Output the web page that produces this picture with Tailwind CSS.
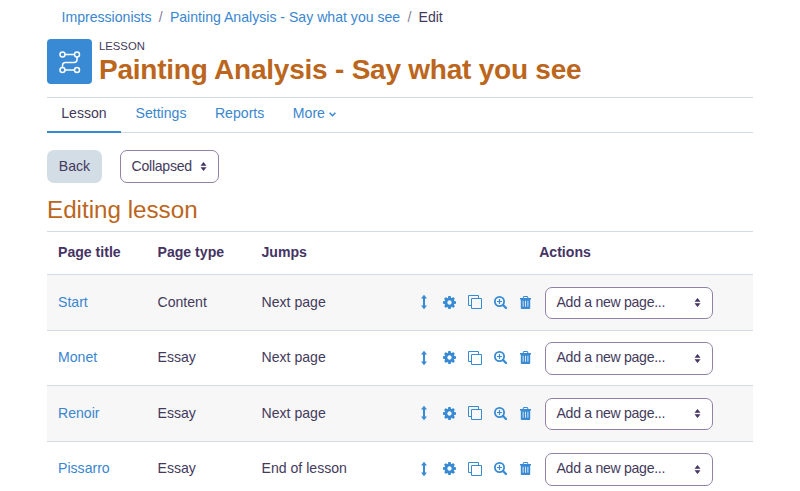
<!DOCTYPE html>
<html lang="en">
<head>
<meta charset="utf-8">
<title>Painting Analysis - Say what you see</title>
<script src="https://cdn.jsdelivr.net/npm/@tailwindcss/browser@4"></script>
</head>
<body class="h-[491px] overflow-hidden bg-white font-['Liberation_Sans',Arial,sans-serif] text-[14.1px] leading-5 text-[#443a5c]">
<svg class="hidden">
  <symbol id="sort" viewBox="0 0 7 9"><path d="M3.500 0 6.500 3.800h-6zM.5 5.200h6L3.500 9z" fill="#443363"/></symbol>
  <symbol id="move" viewBox="0 0 8 16"><path d="M4 .8 7 4.400H5v7.200h2L4 15.2 1 11.600h2V4.400H1z" fill="currentColor"/></symbol>
  <symbol id="gear" viewBox="0 0 1536 1536"><path fill="currentColor" d="M1024 768q0-106-75-181t-181-75-181 75-75 181 75 181 181 75 181-75 75-181zm512-109v222q0 12-8 23t-20 13l-185 28q-19 54-39 91 35 50 107 138 10 12 10 25t-9 23q-27 37-99 108t-94 71q-12 0-26-9l-138-108q-44 23-91 38-16 136-29 186-7 28-36 28H657q-14 0-24.500-8.500T621 1506l-28-184q-49-16-90-37l-141 107q-10 9-25 9-14 0-25-11-126-114-165-168-7-10-7-23 0-12 8-23 15-21 51-66.500t54-70.500q-27-50-41-99L29 913q-13-2-21-12.500T0 877V655q0-12 8-23t19-13l186-28q14-46 39-92-40-57-107-138-10-12-10-24 0-10 9-23 26-36 98.500-107.500T337 135q13 0 26 10l138 107q44-23 91-38 16-136 29-186 7-28 36-28h222q14 0 24.500 8.500T915 30l28 184q49 16 90 37l142-107q9-9 24-9 13 0 25 10 129 119 165 170 7 8 7 22 0 12-8 23-15 21-51 66.500t-54 70.500q26 50 41 98l183 28q13 2 21 12.500t8 23.500z"/></symbol>
  <symbol id="copy" viewBox="0 0 14 14"><path d="M3 10.500H.5V.5h10V3M3.500 3.500h10v10h-10z" fill="none" stroke="currentColor"/></symbol>
  <symbol id="zoom" viewBox="0 0 13 13"><circle cx="5.500" cy="5.500" r="4.600" fill="none" stroke="currentColor" stroke-width="1.800"/><path d="m9 9 3 3" stroke="currentColor" stroke-width="2.300" stroke-linecap="round"/><path d="M5.500 3v5M3 5.500h5" stroke="currentColor" stroke-width="1.200"/></symbol>
  <symbol id="trash" viewBox="0 0 11 13"><path fill="currentColor" fill-rule="evenodd" d="M3.500 0h4l1 2H11v1.400h-.8V12q0 1-1 1H1.800q-1 0-1-1V3.400H0V2h2.500zM4 1l-.4 1h3.800L7 1zM2.700 4.800v6h.8v-6zm2.400 0v6h.8v-6zm2.400 0v6h.8v-6z"/></symbol>
</svg>
<main class="ml-[47px] w-[706px]">
  <nav class="flex h-[39px] gap-[7.200px] pt-[7px] pl-[14.500px] text-[#3a86cf]">
    <a>Impressionists</a><span class="text-[#86809a]">/</span><a>Painting Analysis - Say what you see</a><span class="text-[#86809a]">/</span><span class="text-[#443a5c]">Edit</span>
  </nav>
  <header class="flex h-[58px] gap-[7px]">
    <div class="flex size-[45px] items-center justify-center rounded-[4px] bg-[#378ad3]">
      <svg class="size-6" viewBox="0 0 24 24" fill="none" stroke="#fff" stroke-width="1.500"><circle cx="4.500" cy="4.500" r="2.500"/><circle cx="19" cy="4.500" r="2.500"/><circle cx="4.500" cy="20" r="2.500"/><circle cx="19" cy="20" r="2.500"/><path d="M7 4.500h9.500M19 7v2.500q0 3-3 3H7.500q-3 0-3 3v2M7 20h9.500"/></svg>
    </div>
    <div>
      <div class="h-[14px] text-[11.300px] leading-[14px]">LESSON</div>
      <h1 class="text-[28px] leading-[34px] font-bold tracking-[-0.230px] whitespace-nowrap text-[#bb661c]">Painting Analysis - Say what you see</h1>
    </div>
  </header>
  <nav class="flex h-9 border-y border-[#d0dbe5] text-[#3a86cf]">
    <a class="h-[35px] w-[74px] border-b-2 border-[#378ad3] pt-[5px] text-center text-[#443a5c]">Lesson</a>
    <a class="ml-[14.500px] pt-[5px]">Settings</a>
    <a class="ml-[28.500px] pt-[5px]">Reports</a>
    <a class="ml-[28.500px] flex pt-[5px]">More<svg class="mt-[9px] ml-1 h-[5px] w-[7px]" viewBox="0 0 7 5" fill="none" stroke="currentColor" stroke-width="1.600"><path d="m.6.800 2.900 2.900L6.400.8"/></svg></a>
  </nav>
  <div class="flex h-[50px] gap-[18px] pt-[17px]">
    <button class="h-[33px] w-[55px] rounded-[7px] bg-[#d3dde6] pb-[1px]">Back</button>
    <button class="flex h-[33px] w-[99px] items-center justify-between rounded-[7px] border border-[#9181a5] pr-[11px] pl-[10.500px]"><span class="pb-[1px] tracking-[-0.250px]">Collapsed</span><svg class="h-[9px] w-[7px]"><use href="#sort"/></svg></button>
  </div>
  <h2 class="h-[48px] pt-[12px] text-[24.200px] leading-[30px] text-[#bb661c]">Editing lesson</h2>
  <section>
    <div class="grid h-[43px] grid-cols-[99.500px_104px_1fr_376px] items-center border-t border-[#d0dbe5] pb-[2px] pl-[11px] font-bold text-[#443363]">
      <div>Page title</div><div>Page type</div><div>Jumps</div><div class="text-center">Actions</div>
    </div>
    <div id="rows"></div>
  </section>
</main>
<template id="row">
  <div class="grid h-[55.500px] grid-cols-[99.500px_104px_158px_1fr] items-center border-t border-[#d0dbe5] pl-[11px] odd:bg-[#f7f7f7]">
    <a class="pb-[1px] text-[#3a86cf]"></a><span class="pb-[1px]"></span><span class="pb-[1px]"></span>
    <div class="flex items-center text-[#378ad3]">
      <svg class="h-4 w-2"><use href="#move"/></svg>
      <svg class="ml-[15px] size-[13px]"><use href="#gear"/></svg>
      <svg class="ml-[12.500px] h-[14px] w-[14px]"><use href="#copy"/></svg>
      <svg class="ml-[11.500px] size-[13px]"><use href="#zoom"/></svg>
      <svg class="ml-[13.500px] h-[13px] w-[11px]"><use href="#trash"/></svg>
      <button class="mt-[1px] ml-[13.500px] flex h-[32.500px] w-[168px] items-center justify-between rounded-[7px] border border-[#9181a5] bg-white pr-[11px] pl-[11px] text-[#443a5c]"><span class="pb-[2px] tracking-[-0.300px]">Add a new page...</span><svg class="h-[9px] w-[7px]"><use href="#sort"/></svg></button>
    </div>
  </div>
</template>
<script>
const pages = [['Start', 'Content', 'Next page'], ['Monet', 'Essay', 'Next page'], ['Renoir', 'Essay', 'Next page'], ['Pissarro', 'Essay', 'End of lesson']];
for (const page of pages) {
  const row = document.getElementById('row').content.firstElementChild.cloneNode(true);
  page.forEach((text, i) => row.children[i].textContent = text);
  document.getElementById('rows').append(row);
}
</script>
</body>
</html>
